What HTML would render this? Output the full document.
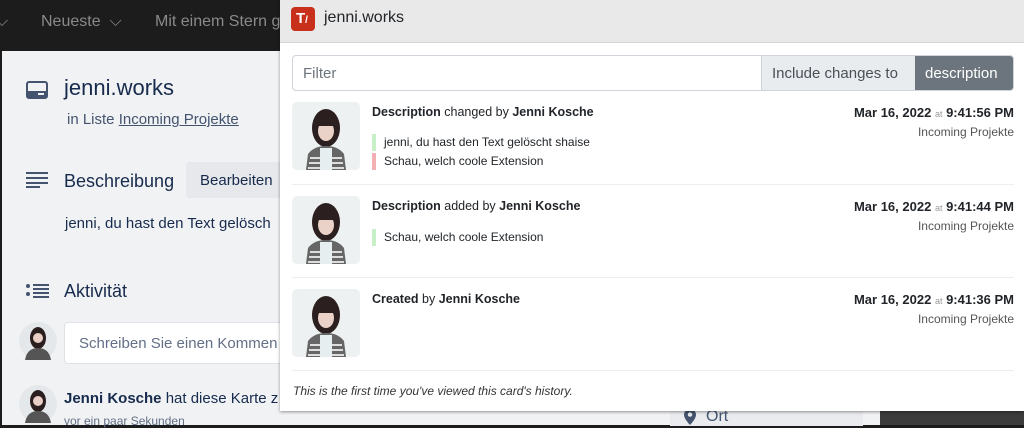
<!DOCTYPE html>
<html><head><meta charset="utf-8"><style>
*{box-sizing:border-box;margin:0;padding:0}
body{width:1024px;height:425px;overflow:hidden;background:#1d1c1c;font-family:"Liberation Sans",sans-serif;position:relative}
.abs{position:absolute}
.top{left:0;top:0;width:1024px;height:51px;background:#1d1c1c;color:#8a8a8a;font-size:16px}
.page{left:2px;top:51px;width:880px;height:374px;background:#f1f2f4;color:#172b4d}
.pop{left:280px;top:0;width:744px;height:411px;background:#fff;box-shadow:0 1px 3px rgba(0,0,0,.4);color:#212529}
.hdr{height:43px;background:#e9e9e9;border-bottom:1px solid #d6d6d6}
.row{position:absolute;left:12px;width:722px;border-bottom:1px solid #eee}
.av{position:absolute;left:0;width:68px;height:68px;border-radius:5px;overflow:hidden}
.t1{position:absolute;left:80px;font-size:12.5px;color:#212529}
.rt{position:absolute;right:0;text-align:right;font-size:12.5px}
.ln{position:absolute;left:80px;font-size:12px;padding-left:8px;border-left:4px solid #c8f0c8;height:17px;line-height:17px}
</style></head><body>
<div class="abs top">
<div class="abs" style="left:-4px;top:13px">⌵</div>
<div class="abs" style="left:41px;top:13px">Neueste &nbsp;⌵</div>
<div class="abs" style="left:155px;top:13px">Mit einem Stern g</div>
</div>
<div class="abs page">
<svg class="abs" style="left:24px;top:30px" width="22" height="18" viewBox="0 0 22 18"><rect x="1" y="1" width="20" height="16" rx="2" fill="none" stroke="#44546f" stroke-width="2"/><rect x="1" y="10" width="20" height="7" fill="#44546f"/><rect x="12" y="12" width="6" height="2" fill="#f1f2f4"/></svg>
<div class="abs" style="left:62px;top:24px;font-size:22px;color:#172b4d">jenni.works</div>
<div class="abs" style="left:65px;top:60px;font-size:15px;color:#44546f">in Liste <u>Incoming Projekte</u></div>
<svg class="abs" style="left:24px;top:121px" width="22" height="16"><g fill="#44546f"><rect y="0" width="22" height="2"/><rect y="5" width="22" height="2"/><rect y="10" width="22" height="2"/><rect y="14" width="14" height="2"/></g></svg>
<div class="abs" style="left:62px;top:120px;font-size:18px">Beschreibung</div>
<div class="abs" style="left:184px;top:111px;width:100px;height:36px;background:#e6e8ec;border-radius:3px;font-size:15px;color:#172b4d;padding:10px 0 0 14px">Bearbeiten</div>
<div class="abs" style="left:63px;top:164px;font-size:15px;color:#172b4d">jenni, du hast den Text gelösch</div>
<svg class="abs" style="left:24px;top:232px" width="24" height="16"><g fill="#44546f"><circle cx="2" cy="3" r="2"/><circle cx="2" cy="11" r="2"/><rect x="7" y="1" width="16" height="2"/><rect x="7" y="5" width="16" height="2"/><rect x="7" y="9" width="16" height="2"/><rect x="7" y="13" width="16" height="2"/></g></svg>
<div class="abs" style="left:62px;top:230px;font-size:18px">Aktivität</div>
<svg class="abs" style="left:17px;top:271px" width="38" height="38"><circle cx="19" cy="19" r="19" fill="#e4e8ea"/><ellipse cx="19" cy="16" rx="8" ry="11" fill="#2a1e1e"/><circle cx="19" cy="16" r="5" fill="#e9cfc6"/><path d="M6 38 Q8 26 19 26 Q30 26 32 38Z" fill="#555"/></svg>
<div class="abs" style="left:62px;top:271px;width:230px;height:42px;background:#fff;border:1px solid #dfe1e6;border-radius:4px;font-size:15px;color:#626f86;padding:12px 0 0 14px">Schreiben Sie einen Kommen</div>
<svg class="abs" style="left:17px;top:334px" width="38" height="38"><circle cx="19" cy="19" r="19" fill="#e4e8ea"/><ellipse cx="19" cy="16" rx="8" ry="11" fill="#2a1e1e"/><circle cx="19" cy="16" r="5" fill="#e9cfc6"/><path d="M6 38 Q8 26 19 26 Q30 26 32 38Z" fill="#555"/></svg>
<div class="abs" style="left:62px;top:339px;font-size:15px"><b>Jenni Kosche</b> hat diese Karte z</div>
<div class="abs" style="left:62px;top:363px;font-size:12px;color:#626f86">vor ein paar Sekunden</div>
<div class="abs" style="left:668px;top:345px;width:193px;height:30px;background:#e9ebee;font-size:16px;color:#44546f;padding:12px 0 0 36px">Ort</div>
<svg class="abs" style="left:682px;top:358px" width="12" height="16"><path d="M6 0C2.7 0 0 2.6 0 5.8 0 10 6 16 6 16S12 10 12 5.8C12 2.6 9.3 0 6 0Z" fill="#44546f"/><circle cx="6" cy="5.6" r="2.2" fill="#e9ebee"/></svg>
</div>
<div class="abs" style="left:880px;top:392px;width:144px;height:33px;background:#3c3c3c"></div>
<div class="abs pop">
<div class="hdr">
<div class="abs" style="left:11px;top:7px;width:24px;height:24px;background:#c9301c;border-radius:4px;color:#fff;font-size:15px;font-weight:bold;padding:3px 0 0 5px">T<span style="font-size:10px">/</span></div>
<div class="abs" style="left:44px;top:9px;font-size:16px;color:#212529">jenni.works</div>
</div>
<div class="abs" style="left:12px;top:55px;width:722px;height:36px;border:1px solid #ced4da;border-radius:4px;overflow:hidden">
<div class="abs" style="left:10px;top:9px;font-size:15px;color:#6c757d">Filter</div>
<div class="abs" style="left:468px;top:0;width:154px;height:36px;background:#e9ecef;border-left:1px solid #ced4da;font-size:15px;color:#495057;padding:9px 0 0 10px">Include changes to</div>
<div class="abs" style="left:622px;top:0;width:100px;height:36px;background:#6c757d;color:#fff;font-size:15px;padding:9px 0 0 10px">description</div>
</div>
<div class="row" style="top:100px;height:85px">
<svg class="av" style="top:2px" viewBox="0 0 68 68"><rect width="68" height="68" fill="#edf1f1"/><ellipse cx="34" cy="26" rx="14" ry="19" fill="#2b1f1f"/><path d="M14 68 L16 52 Q22 44 34 44 Q46 44 52 52 L54 68Z" fill="#666"/><path d="M18 56h32M17 61h34M16 66h36" stroke="#ddd" stroke-width="2"/><rect x="28" y="46" width="12" height="22" fill="#e6eef0"/><ellipse cx="34" cy="29" rx="8" ry="10" fill="#ead2c8"/><rect x="25" y="17" width="18" height="7" fill="#2b1f1f"/></svg>
<div class="t1" style="top:5px"><b>Description</b> changed by <b>Jenni Kosche</b></div>
<div class="rt" style="top:5px;font-size:13px"><b>Mar 16, 2022</b> <span style="font-size:9px;color:#999">at</span> <b>9:41:56 PM</b></div>
<div class="rt" style="top:25px;color:#555;font-size:12px">Incoming Projekte</div>
<div class="ln" style="top:34px">jenni, du hast den Text gelöscht shaise</div>
<div class="ln" style="top:53px;border-left-color:#f2b0b4">Schau, welch coole Extension</div>
</div>
<div class="row" style="top:185px;height:93px">
<svg class="av" style="top:11px" viewBox="0 0 68 68"><rect width="68" height="68" fill="#edf1f1"/><ellipse cx="34" cy="26" rx="14" ry="19" fill="#2b1f1f"/><path d="M14 68 L16 52 Q22 44 34 44 Q46 44 52 52 L54 68Z" fill="#666"/><path d="M18 56h32M17 61h34M16 66h36" stroke="#ddd" stroke-width="2"/><rect x="28" y="46" width="12" height="22" fill="#e6eef0"/><ellipse cx="34" cy="29" rx="8" ry="10" fill="#ead2c8"/><rect x="25" y="17" width="18" height="7" fill="#2b1f1f"/></svg>
<div class="t1" style="top:14px"><b>Description</b> added by <b>Jenni Kosche</b></div>
<div class="rt" style="top:14px;font-size:13px"><b>Mar 16, 2022</b> <span style="font-size:9px;color:#999">at</span> <b>9:41:44 PM</b></div>
<div class="rt" style="top:34px;color:#555;font-size:12px">Incoming Projekte</div>
<div class="ln" style="top:44px">Schau, welch coole Extension</div>
</div>
<div class="row" style="top:278px;height:93px">
<svg class="av" style="top:11px" viewBox="0 0 68 68"><rect width="68" height="68" fill="#edf1f1"/><ellipse cx="34" cy="26" rx="14" ry="19" fill="#2b1f1f"/><path d="M14 68 L16 52 Q22 44 34 44 Q46 44 52 52 L54 68Z" fill="#666"/><path d="M18 56h32M17 61h34M16 66h36" stroke="#ddd" stroke-width="2"/><rect x="28" y="46" width="12" height="22" fill="#e6eef0"/><ellipse cx="34" cy="29" rx="8" ry="10" fill="#ead2c8"/><rect x="25" y="17" width="18" height="7" fill="#2b1f1f"/></svg>
<div class="t1" style="top:14px"><b>Created</b> by <b>Jenni Kosche</b></div>
<div class="rt" style="top:14px;font-size:13px"><b>Mar 16, 2022</b> <span style="font-size:9px;color:#999">at</span> <b>9:41:36 PM</b></div>
<div class="rt" style="top:34px;color:#555;font-size:12px">Incoming Projekte</div>
</div>
<div class="abs" style="left:13px;top:384px;font-size:12px;font-style:italic;color:#333">This is the first time you've viewed this card's history.</div>
</div>
</body></html>
